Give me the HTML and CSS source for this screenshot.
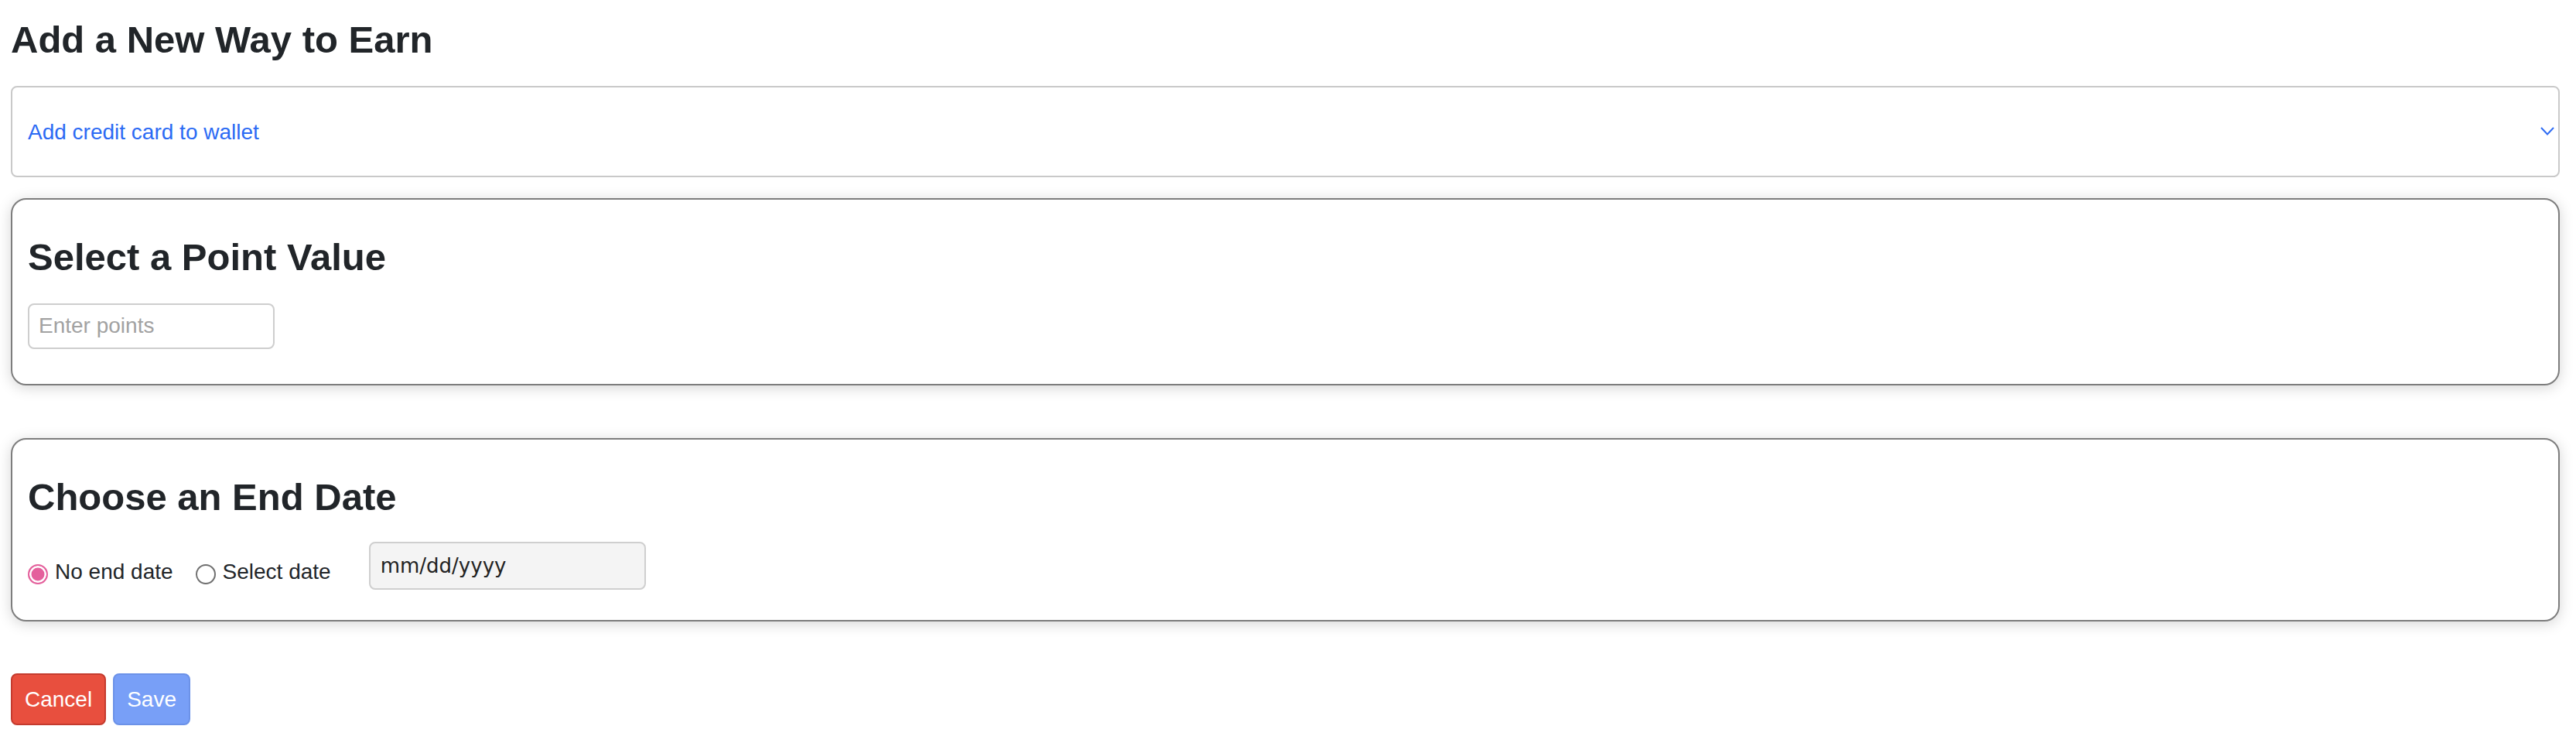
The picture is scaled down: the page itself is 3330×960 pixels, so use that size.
FILE: index.html
```html
<!DOCTYPE html>
<html lang="en">
<head>
<meta charset="utf-8">
<title>Add a New Way to Earn</title>
<link rel="stylesheet" href="styles.css">
</head>
<body>
<div class="page">
  <h1 class="title">Add a New Way to Earn</h1>

  <div class="accordion">
    <span class="accordion-label">Add credit card to wallet</span>
    <svg class="chevron" width="18" height="11" viewBox="0 0 18 11" aria-hidden="true">
      <polyline points="1,1 9,9.5 17,1" fill="none" stroke="#2f6cf3" stroke-width="2"/>
    </svg>
  </div>

  <section class="card card-points">
    <h2 class="card-title">Select a Point Value</h2>
    <div class="text-input"><span class="placeholder">Enter points</span></div>
  </section>

  <section class="card card-date">
    <h2 class="card-title">Choose an End Date</h2>
    <div class="date-row">
      <div class="radios">
        <label class="radio-item"><span class="radio checked"></span><span class="radio-text">No end date</span></label>
        <label class="radio-item"><span class="radio"></span><span class="radio-text">Select date</span></label>
      </div>
      <div class="date-input">mm/dd/yyyy</div>
    </div>
  </section>

  <div class="actions">
    <button class="btn btn-cancel" type="button">Cancel</button>
    <button class="btn btn-save" type="button">Save</button>
  </div>
</div>
</body>
</html>
```

FILE: styles.css
```css
* { box-sizing: border-box; }

html, body {
  margin: 0;
  background: #ffffff;
}

body {
  font-family: "Liberation Sans", Arial, Helvetica, sans-serif;
  color: #212529;
}

.page {
  padding: 22px 21px 0 14px;
}

.title {
  margin: 0 0 30px;
  font-size: 49px;
  line-height: 58.8px;
  font-weight: 700;
  color: #212529;
}

.accordion {
  height: 118px;
  border: 2px solid #c9c9c9;
  border-radius: 8px;
  display: flex;
  align-items: center;
  justify-content: space-between;
  padding: 0 5px 0 20px;
}

.accordion-label {
  font-size: 28px;
  line-height: 32px;
  color: #2b6af4;
  padding-top: 2px;
}

.chevron {
  display: block;
}

.card {
  margin-top: 27px;
  background: #fff;
  border: 2px solid #7d7d7d;
  border-radius: 20px;
  padding: 45px 20px 45px 20px;
  box-shadow: 0 3px 18px rgba(0, 0, 0, 0.17);
}

.card-date {
  margin-top: 68px;
  padding-bottom: 39px;
}

.card-title {
  margin: 0 0 30px;
  font-size: 49px;
  line-height: 58.8px;
  font-weight: 700;
  color: #212529;
}

.card-date .card-title {
  margin-bottom: 29px;
}

.text-input {
  width: 319px;
  height: 59px;
  border: 2px solid #cecece;
  border-radius: 8px;
  padding: 0 12px;
  display: flex;
  align-items: center;
}

.placeholder {
  font-size: 28px;
  color: #a2a2a2;
}

.date-row {
  display: flex;
  align-items: flex-start;
}

.radios {
  display: flex;
  align-items: center;
  margin-top: 23px;
}

.radio-item {
  display: flex;
  align-items: center;
  font-size: 28px;
  line-height: 32px;
  color: #212529;
}

.radio-item + .radio-item {
  margin-left: 29px;
}

.radio {
  width: 26px;
  height: 26px;
  border-radius: 50%;
  border: 2px solid #6f6f6f;
  background: #fff;
  margin: 5px 9px 0 0;
  flex: none;
}

.radio.checked {
  border: 2.5px solid #e4609c;
  background: #e4609c;
  box-shadow: inset 0 0 0 2.5px #fff;
}

.date-input {
  margin-left: 49px;
  width: 358px;
  height: 62px;
  background: #f4f4f4;
  border: 2px solid #cfcfcf;
  border-radius: 8px;
  padding: 0 13px;
  display: flex;
  align-items: center;
  font-family: "DejaVu Sans", sans-serif;
  font-size: 26px;
  color: #222;
}

.actions {
  display: flex;
  gap: 9px;
  margin-top: 67px;
}

.btn {
  height: 67px;
  padding: 0 16px;
  border-radius: 8px;
  border: 2px solid transparent;
  font-family: "Liberation Sans", Arial, sans-serif;
  font-size: 28px;
  color: #fff;
  cursor: pointer;
}

.btn-cancel {
  background: #e84f3e;
  border-color: #c43b2e;
}

.btn-save {
  background: #789ff7;
  border-color: #6c92e8;
}
```
